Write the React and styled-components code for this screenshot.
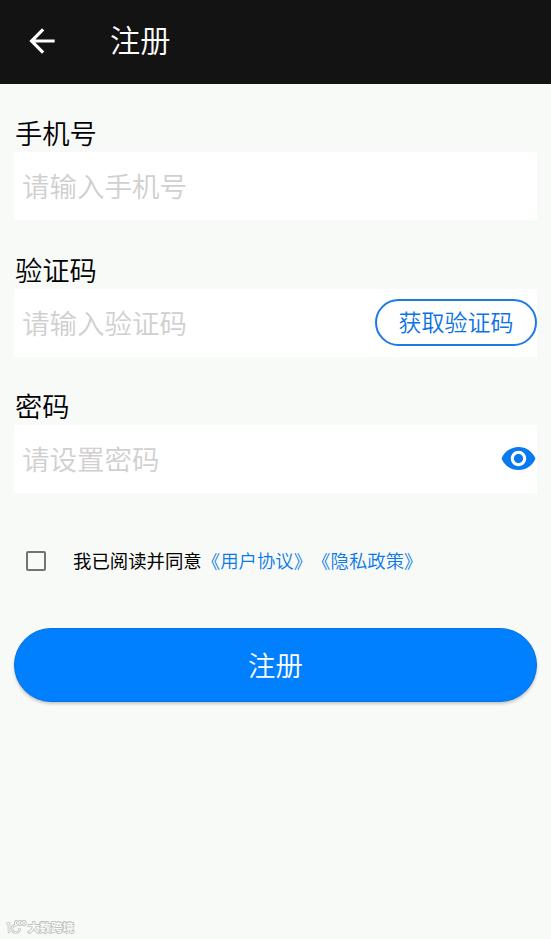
import React from "react";
import styled, { createGlobalStyle } from "styled-components";

const Global = createGlobalStyle`
  * { box-sizing: border-box; }
  body { margin: 0; background: #f8faf8; }
  button, input { font: inherit; }
`;

const Page = styled.div`
  height: 939px;
  display: flex;
  flex-direction: column;
  overflow: hidden;
  background: #f8faf8;
  color: #000;
  font-family: "Noto Sans CJK SC", sans-serif;
  font-weight: 350;
  text-spacing-trim: space-all;
`;

const Header = styled.header`
  height: 84px;
  flex: none;
  display: flex;
  align-items: center;
  padding: 0 0 2px 23px;
  background: #131313;
  color: #fff;
`;

const BackIcon = styled.svg`
  width: 38px;
  height: 38px;
  margin-right: 49px;
  fill: currentColor;
`;

const Title = styled.h1`
  margin: 0;
  padding-bottom: 4px;
  font-size: 30.2px;
  font-weight: inherit;
  line-height: 40px;
`;

const Form = styled.form`
  display: flex;
  flex-direction: column;
  padding: 32px 14px 0;
`;

const Field = styled.label`
  height: 136.5px;
  display: block;
`;

const Label = styled.span`
  display: block;
  height: 36px;
  padding-left: 1px;
  font-size: 27.3px;
  line-height: 33px;
`;

const InputRow = styled.span`
  display: flex;
  align-items: center;
  height: 68px;
  padding-left: 8px;
  background: #fff;
`;

const Input = styled.input`
  flex: 1;
  min-width: 0;
  height: 68px;
  padding: 0 0 2px;
  border: 0;
  outline: 0;
  background: transparent;
  font-size: 27.5px;
  &::placeholder { color: #d1cfcf; opacity: 1; }
`;

const CodeButton = styled.button`
  width: 162px;
  height: 47px;
  flex: none;
  padding: 0 0 2px;
  border: 2px solid #1c7be0;
  border-radius: 24px;
  background: #fff;
  color: #0b73e4;
  font-size: 23px;
  line-height: 41px;
`;

const EyeIcon = styled.svg`
  width: 37px;
  height: 37px;
  flex: none;
  margin-bottom: 2px;
  fill: #0879ef;
`;

const Agreement = styled.div`
  height: 30px;
  display: flex;
  align-items: center;
  margin-top: 20.5px;
  padding-left: 12px;
  font-size: 18.4px;
  font-weight: 400;
  line-height: 28px;
  white-space: nowrap;
`;

const AgreementText = styled.span`
  padding-bottom: 2px;
`;

const Checkbox = styled.input`
  appearance: none;
  width: 20px;
  height: 20px;
  margin: 0 27px 0 0;
  border: 2px solid #727472;
  border-radius: 2px;
`;

const Link = styled.a`
  color: #0b79e8;
  font-weight: 350;
`;

const Submit = styled.button`
  height: 74px;
  margin-top: 52px;
  padding: 0 0 2px;
  border: 1px solid #0873df;
  border-radius: 37px;
  background: #007fff;
  box-shadow: 0 2px 3px rgba(0, 0, 0, 0.2);
  color: #fff;
  font-size: 27.4px;
  line-height: 70px;
`;

const Watermark = styled.footer`
  display: flex;
  align-items: center;
  height: 18px;
  margin: auto 0 3px 6px;
`;

const WatermarkLogo = styled.svg`
  width: 22px;
  height: 15px;
  fill: none;
`;

const WatermarkText = styled.span`
  font-size: 11.5px;
  line-height: 16px;
  font-weight: 500;
  color: #fff;
  -webkit-text-stroke: 1.8px #bfc1bf;
  paint-order: stroke fill;
`;

function LogoStrokes({ color, width }) {
  return (
    <g stroke={color} strokeWidth={width} strokeLinecap="round" strokeLinejoin="round">
      <path d="M1.500 3.500H3V12M11 5C8 5 6 6 6 8.800S8 12.500 10 12.500 13.500 11 13.500 9" />
      <ellipse cx="10.500" cy="3" rx="1.300" ry="1.700" />
      <ellipse cx="14.300" cy="3" rx="1.300" ry="1.700" />
      <ellipse cx="18.100" cy="3" rx="1.300" ry="1.700" />
    </g>
  );
}

export default function App() {
  return (
    <>
      <Global />
      <Page>
        <Header>
          <BackIcon viewBox="0 0 24 24" aria-label="返回">
            <path d="M20 11H7.830l5.590-5.590L12 4l-8 8 8 8 1.410-1.410L7.830 13H20v-2z" />
          </BackIcon>
          <Title>注册</Title>
        </Header>
        <Form onSubmit={(e) => e.preventDefault()}>
          <Field>
            <Label>手机号</Label>
            <InputRow>
              <Input type="tel" placeholder="请输入手机号" />
            </InputRow>
          </Field>
          <Field>
            <Label>验证码</Label>
            <InputRow>
              <Input placeholder="请输入验证码" />
              <CodeButton type="button">获取验证码</CodeButton>
            </InputRow>
          </Field>
          <Field>
            <Label>密码</Label>
            <InputRow>
              <Input type="password" placeholder="请设置密码" />
              <EyeIcon viewBox="0 0 24 24">
                <path d="M12 4.500C7 4.500 2.730 7.610 1 12c1.730 4.390 6 7.500 11 7.500s9.270-3.110 11-7.500c-1.730-4.390-6-7.500-11-7.500zM12 17c-2.760 0-5-2.240-5-5s2.240-5 5-5 5 2.240 5 5-2.240 5-5 5zm0-8c-1.660 0-3 1.340-3 3s1.340 3 3 3 3-1.340 3-3-1.340-3-3-3z" />
              </EyeIcon>
            </InputRow>
          </Field>
          <Agreement>
            <Checkbox type="checkbox" aria-label="同意协议" />
            <AgreementText>
              我已阅读并同意<Link>《用户协议》</Link><Link>《隐私政策》</Link>
            </AgreementText>
          </Agreement>
          <Submit type="submit">注册</Submit>
        </Form>
        <Watermark>
          <WatermarkLogo viewBox="0 0 22 15">
            <LogoStrokes color="#bfc1bf" width={2.6} />
            <LogoStrokes color="#fff" width={1} />
          </WatermarkLogo>
          <WatermarkText>大数跨境</WatermarkText>
        </Watermark>
      </Page>
    </>
  );
}
